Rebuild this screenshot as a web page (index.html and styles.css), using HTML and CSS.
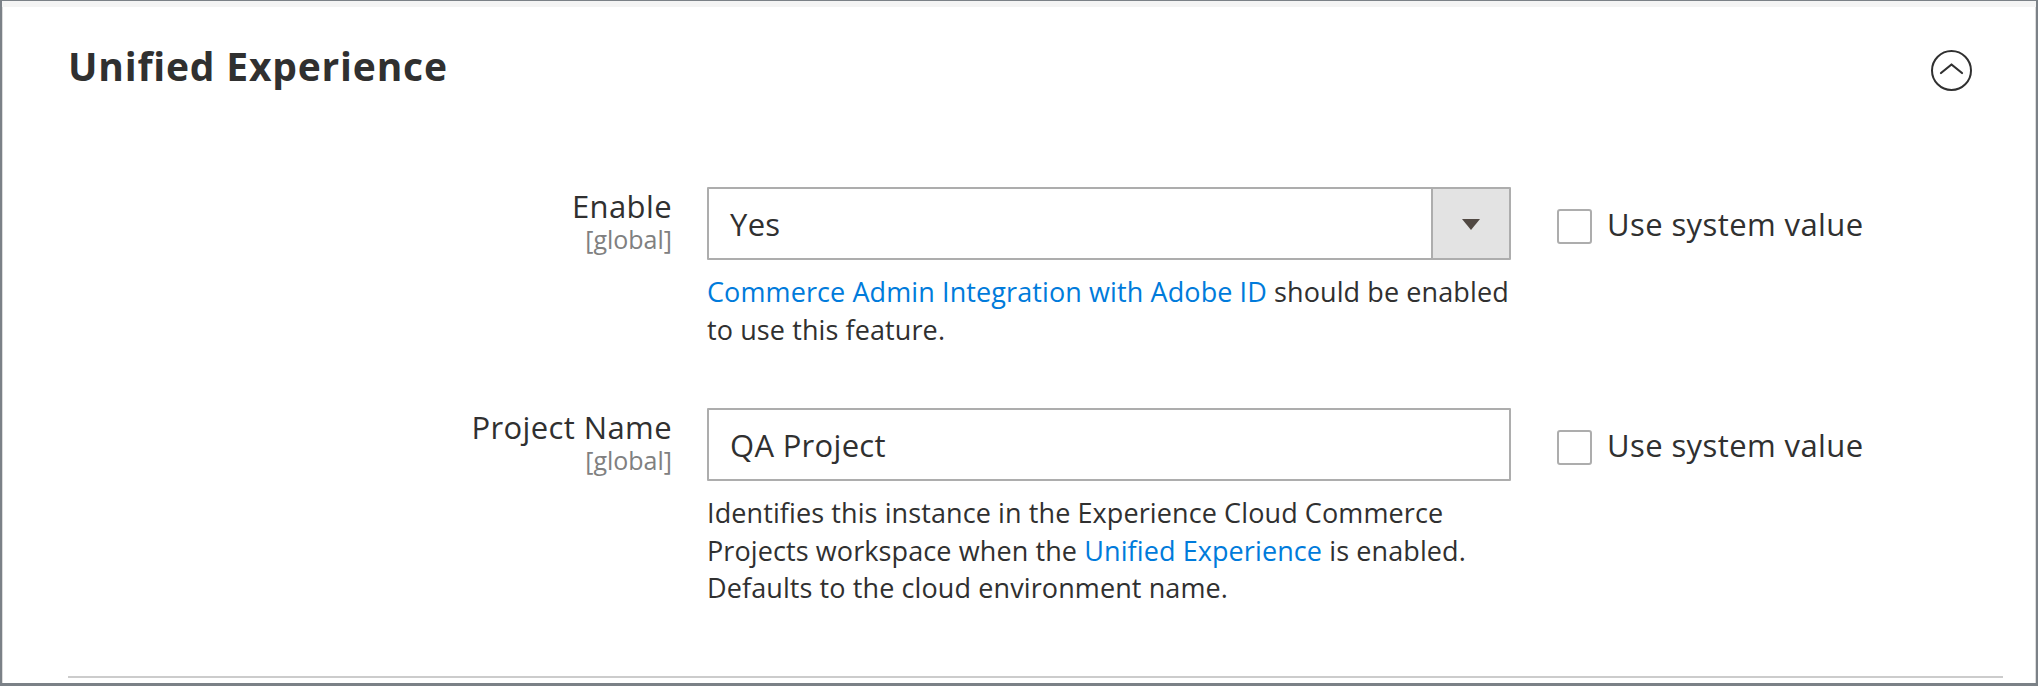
FILE: index.html
```html
<!DOCTYPE html>
<html lang="en">
<head>
<meta charset="utf-8">
<title>Unified Experience</title>
<link rel="stylesheet" href="styles.css">
</head>
<body>
<div class="frame">
  <section class="section">
    <header class="section-head">
      <h2 class="section-title">Unified Experience</h2>
      <button class="collapse" type="button" aria-label="Collapse">
        <svg width="41" height="41" viewBox="0 0 41 41" aria-hidden="true">
          <circle cx="20.5" cy="20.5" r="19.5" fill="none" stroke="#303030" stroke-width="2"/>
          <polyline points="10,23 20.5,14.5 31,23" fill="none" stroke="#303030" stroke-width="2.2" stroke-linecap="round" stroke-linejoin="round"/>
        </svg>
      </button>
    </header>

    <div class="fields">
      <div class="field">
        <div class="field-label">
          <span class="label-text">Enable</span>
          <span class="scope">[global]</span>
        </div>
        <div class="field-control">
          <div class="select">
            <span class="control-value">Yes</span>
            <span class="select-btn">
              <svg width="18" height="12" viewBox="0 0 18 12" aria-hidden="true"><polygon points="0,0 18,0 9,11" fill="#514943"/></svg>
            </span>
          </div>
          <p class="note"><a href="#" class="link">Commerce Admin Integration with Adobe ID</a> should be enabled<br>to use this feature.</p>
        </div>
        <label class="use-default">
          <span class="checkbox"></span>
          <span class="use-default-text">Use system value</span>
        </label>
      </div>

      <div class="field">
        <div class="field-label">
          <span class="label-text">Project Name</span>
          <span class="scope">[global]</span>
        </div>
        <div class="field-control">
          <div class="input">
            <span class="control-value">QA Project</span>
          </div>
          <p class="note">Identifies this instance in the Experience Cloud Commerce<br>Projects workspace when the <a href="#" class="link">Unified Experience</a> is enabled.<br>Defaults to the cloud environment name.</p>
        </div>
        <label class="use-default">
          <span class="checkbox"></span>
          <span class="use-default-text">Use system value</span>
        </label>
      </div>
    </div>

    <div class="divider"></div>
  </section>
</div>
</body>
</html>
```

FILE: styles.css
```css
html, body {
  margin: 0;
  padding: 0;
  background: #ffffff;
}

body {
  font-family: "Open Sans", "Noto Sans", sans-serif;
  color: #303030;
}

.frame {
  box-sizing: border-box;
  width: 2038px;
  height: 686px;
  border-style: solid;
  border-color: #7b8187;
  border-width: 1px 2px 3px 2px;
  background: #ffffff;
  box-shadow: inset 0 6px 0 #f4f4f4, inset 1px 0 0 #dcdcdc, inset -1px 0 0 #dcdcdc;
}

.section {
  padding: 43px 33px 0 66px;
}

.section-head {
  display: flex;
  justify-content: space-between;
  align-items: flex-start;
  height: 44px;
}

.section-title {
  margin: 0;
  font-size: 39px;
  line-height: 44px;
  letter-spacing: 0.8px;
  font-weight: 700;
  color: #303030;
}

.collapse {
  margin: 6px 31px 0 0;
  padding: 0;
  border: 0;
  background: none;
  width: 41px;
  height: 41px;
  display: block;
}

.collapse svg {
  display: block;
}

.fields {
  margin-top: 99px;
  display: flex;
  flex-direction: column;
  gap: 60px;
}

.field {
  display: grid;
  grid-template-columns: 604px 804px auto;
  column-gap: 35px;
  align-items: start;
}

.field-label {
  display: flex;
  flex-direction: column;
  align-items: flex-end;
  text-align: right;
}

.label-text {
  font-size: 31px;
  line-height: 38px;
  letter-spacing: 0.4px;
  color: #303030;
}

.scope {
  font-size: 25px;
  line-height: 28px;
  color: #808080;
}

.field-control {
  display: flex;
  flex-direction: column;
}

.select,
.input {
  box-sizing: border-box;
  height: 73px;
  border: 2px solid #adadad;
  border-radius: 1px;
  display: flex;
  align-items: center;
  background: #ffffff;
}

.control-value {
  flex: 1;
  padding-left: 21px;
  font-size: 31px;
  letter-spacing: 0.3px;
  color: #303030;
  white-space: nowrap;
}

.select-btn {
  align-self: stretch;
  width: 76px;
  border-left: 2px solid #adadad;
  background: #e3e3e3;
  display: flex;
  align-items: center;
  justify-content: center;
}

.select-btn svg {
  display: block;
  margin-top: 2px;
}

.note {
  margin: 13px 0 0;
  font-size: 27px;
  line-height: 37.5px;
  letter-spacing: 0.1px;
  color: #303030;
  white-space: nowrap;
}

.link {
  color: #007bdb;
  text-decoration: none;
}

.use-default {
  margin-left: 11px;
  height: 73px;
  display: flex;
  align-items: center;
  gap: 15px;
}

.checkbox {
  box-sizing: border-box;
  width: 35px;
  height: 35px;
  margin-top: 6px;
  border: 2px solid #adadad;
  border-radius: 3px;
  background: #ffffff;
  flex: none;
}

.use-default-text {
  font-size: 31px;
  letter-spacing: 0.4px;
  color: #303030;
  white-space: nowrap;
}

.divider {
  margin-top: 69px;
  height: 2px;
  background: #cccccc;
}
```
